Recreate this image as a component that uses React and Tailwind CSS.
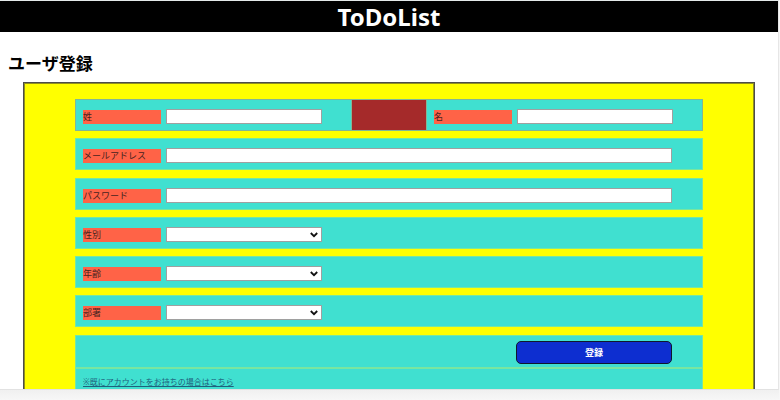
import React from "react";

const ROW = "flex h-8 items-center border border-[#79e6a0] bg-[#40e0d0]";
const LABEL = "mr-[5px] h-3.5 w-[78px] shrink-0 bg-[#ff6347] text-[9px] leading-3.5 text-[#4a2420]";
const CONTROL = "h-[15px] rounded-none border border-[#a0a0a0] bg-white text-[9px] text-black outline-none";

function Label({ id, children }) {
  return (
    <label htmlFor={id} className={LABEL}>
      {children}
    </label>
  );
}

function TextRow({ id, label, type }) {
  return (
    <div className={`${ROW} pt-[3px] pr-[30px] pl-[7px]`}>
      <Label id={id}>{label}</Label>
      <input id={id} type={type} className={`${CONTROL} min-w-0 flex-1`} />
    </div>
  );
}

function SelectRow({ id, label }) {
  return (
    <div className={`${ROW} pt-[3px] pl-[7px]`}>
      <Label id={id}>{label}</Label>
      <div className="relative flex w-[156px]">
        <select id={id} defaultValue="" className={`${CONTROL} w-full appearance-none`}>
          <option value=""></option>
        </select>
        <svg
          viewBox="0 0 8 6"
          className="pointer-events-none absolute top-[5px] right-1 h-1.5 w-2"
          fill="none"
          stroke="#111"
          strokeWidth="1.8"
          aria-hidden="true"
        >
          <path d="M0.8 1 L4 4.2 L7.2 1" />
        </svg>
      </div>
    </div>
  );
}

export default function App() {
  return (
    <div className="flex h-screen flex-col overflow-hidden bg-[#f7f7f7] pr-px font-['Noto_Sans','Noto_Sans_CJK_JP',sans-serif]">
      <div className="min-h-0 flex-1 overflow-hidden border-t border-r border-b border-t-[#e4e9e9] border-r-[#e6e6e6] border-b-[#e2e2e2] bg-white">
        <header className="h-[31px] bg-black text-center text-[24px] leading-[31px] font-bold text-white">
          ToDoList
        </header>
        <main>
          <h1 className="mt-5 mb-1.5 ml-2 text-[17px] leading-6 font-bold text-black">ユーザ登録</h1>
          <form
            onSubmit={(e) => e.preventDefault()}
            className="mr-[23px] ml-[23px] border border-[#4c4c4c]"
          >
            <div className="flex flex-col gap-2 border border-[#8f8f20] bg-[#ffff00] px-[50px] pt-[15px] pb-8">
              <div className="flex flex-col gap-[7px]">
                <div className="flex h-8 border border-[#82b796] bg-[#40e0d0]">
                  <div className="flex flex-1 items-center pt-[3px] pl-[7px]">
                    <Label id="sei">姓</Label>
                    <input id="sei" type="text" className={`${CONTROL} w-[156px]`} />
                  </div>
                  <div className="w-[76px] border-x border-[#82b796] bg-[#a52a2a]" />
                  <div className="flex flex-1 items-center pt-[3px] pl-[7px]">
                    <Label id="mei">名</Label>
                    <input id="mei" type="text" className={`${CONTROL} w-[156px]`} />
                  </div>
                </div>
                <TextRow id="email" label="メールアドレス" type="email" />
              </div>
              <div className="flex flex-col gap-[7px]">
                <TextRow id="password" label="パスワード" type="password" />
                <SelectRow id="gender" label="性別" />
                <SelectRow id="age" label="年齢" />
                <SelectRow id="department" label="部署" />
              </div>
              <div className="flex flex-col">
                <div className={`${ROW} h-[33px] justify-end pt-0.5 pr-[30px]`}>
                  <button
                    type="submit"
                    className="h-[23px] w-[156px] rounded-[5px] border border-[#10182c] bg-[#0d2ed0] text-[9px] leading-none font-bold text-white"
                  >
                    登録
                  </button>
                </div>
                <div className={`${ROW} pb-1 pl-[7px]`}>
                  <a href="#login" className="text-[8px] leading-3 text-[#20607c] underline">
                    ※既にアカウントをお持ちの場合はこちら
                  </a>
                </div>
              </div>
            </div>
          </form>
        </main>
      </div>
      <div className="h-2.5 shrink-0 bg-linear-to-b from-[#f0f0f0] to-[#f7f7f7]" />
    </div>
  );
}
